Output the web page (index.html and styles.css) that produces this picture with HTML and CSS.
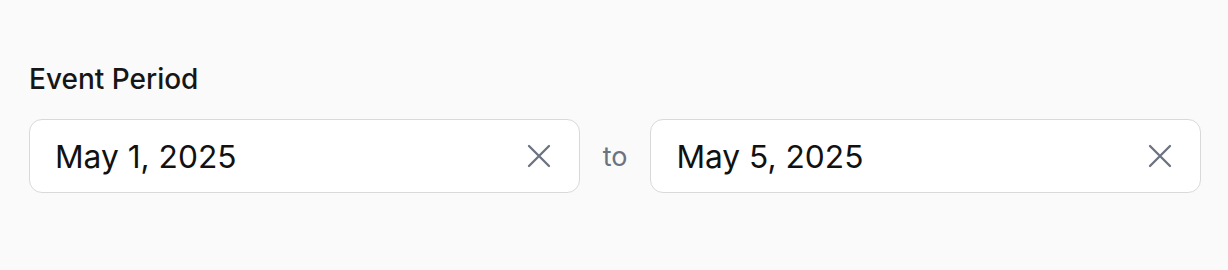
FILE: index.html
```html
<!DOCTYPE html>
<html lang="en">
<head>
  <meta charset="UTF-8">
  <title>Event Period</title>
  <link rel="stylesheet" href="styles.css">
</head>
<body>
  <div class="field">
    <label class="field-label">Event Period</label>
    <div class="range">
      <div class="date-input">
        <span class="date-value">May 1, 2025</span>
        <button class="clear" aria-label="Clear">
          <svg width="24" height="24" viewBox="0 0 24 24" fill="none" stroke="currentColor" stroke-width="2.3" stroke-linecap="round"><path d="M2 2l20 20M22 2L2 22"/></svg>
        </button>
      </div>
      <span class="sep">to</span>
      <div class="date-input">
        <span class="date-value">May 5, 2025</span>
        <button class="clear" aria-label="Clear">
          <svg width="24" height="24" viewBox="0 0 24 24" fill="none" stroke="currentColor" stroke-width="2.3" stroke-linecap="round"><path d="M2 2l20 20M22 2L2 22"/></svg>
        </button>
      </div>
    </div>
  </div>
</body>
</html>
```

FILE: styles.css
```css
body {
  margin: 0;
  background: #fafafa;
  font-family: Inter, "Noto Sans", sans-serif;
  color: #111;
}

.field {
  padding: 63px 27px 0 29px;
}

.field-label {
  display: block;
  font-size: 28px;
  font-weight: 500;
  margin-bottom: 23px;
  line-height: 33px;
  color: #161616;
}

.range {
  display: flex;
  align-items: center;
  gap: 23px;
}

.date-input {
  flex: 1;
  box-sizing: border-box;
  display: flex;
  align-items: center;
  justify-content: space-between;
  height: 74px;
  background: #fff;
  border: 1.5px solid #d9d9d9;
  border-radius: 13px;
  padding: 0 28px 0 25px;
}

.date-value {
  font-size: 31.7px;
}

.clear {
  display: flex;
  border: none;
  background: none;
  padding: 0;
  color: #6b7280;
}

.sep {
  font-size: 27px;
  color: #6b7280;
}
```
